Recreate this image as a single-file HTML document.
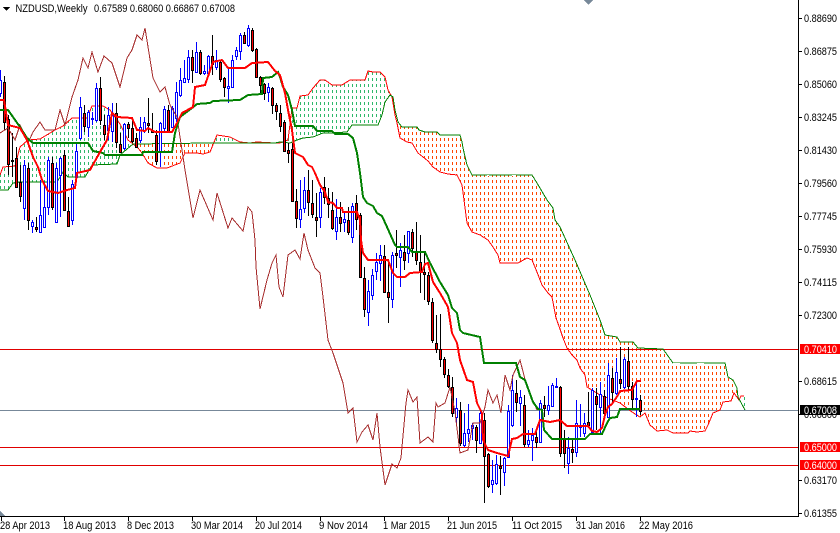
<!DOCTYPE html>
<html><head><meta charset="utf-8"><title>NZDUSD,Weekly</title>
<style>html,body{margin:0;padding:0;background:#fff;overflow:hidden}svg{display:block}text{font-family:"Liberation Sans",sans-serif;font-size:11px;fill:#000}</style>
</head><body>
<svg width="840" height="533" viewBox="0 0 840 533" xmlns="http://www.w3.org/2000/svg">
<defs>
<pattern id="g" width="4" height="6" patternUnits="userSpaceOnUse"><rect x="0" y="0" width="1" height="3" fill="#2eb86a"/></pattern>
<pattern id="o" width="4" height="6" patternUnits="userSpaceOnUse"><rect x="0" y="0" width="1" height="3" fill="#ff4500"/></pattern>
</defs>
<rect width="840" height="533" fill="#fff"/>
<g shape-rendering="crispEdges">
<polygon fill="url(#g)" points="0,175 3,167 15,166 20,147 28,140 40,139 55,130 63,126 72,118 87,118 92,106 103,106 110,110 120,124 128,140 133,144 120,155 117,164 92,165 85,177 68,177 63,172 57,182 20,182 13,183 8,190 0,190"/>
<polygon fill="url(#o)" points="133,144 214,143 210,152 203,154 197,153 185,153 180,163 167,168 157,168 148,163 142,153 138,148"/>
<polygon fill="url(#g)" points="214,143 217,135 230,137 240,142 250,143 257,142 275,143 280,143 288,140 292,108 297,108 300,96 308,95 313,88 320,80 325,80 332,85 342,85 350,80 365,80 368,71 373,72 380,72 385,77 388,90 391,96 390,95 385,102 382,115 378,125 352,125 347,132 330,133 323,133 313,137 303,138 297,140 290,143 280,142"/>
<polygon fill="url(#o)" points="392,97 394,105 398,122 402,127 417,127 419,130 425,132 437,132 440,135 460,135 462,142 463,148 467,165 472,175 532,175 537,183 547,200 553,208 555,220 560,227 575,260 590,295 600,320 605,335 617,337 620,342 633,342 638,348 663,349 673,363 725,363 728,377 733,380 737,388 741,396 735,397 732,400 723,400 720,410 713,413 708,425 705,431 697,432 690,431 688,433 673,433 667,430 657,431 650,425 645,413 640,417 632,412 620,403 600,395 587,387 585,375 580,368 577,360 572,355 567,348 563,338 560,329 556,318 552,297 548,293 542,285 537,272 532,260 527,258 518,263 500,263 498,255 493,247 488,240 480,235 472,232 467,223 464,200 462,185 457,175 448,174 440,172 433,167 428,161 418,153 412,143 407,142 400,138 397,123 395,115"/>
<path d="M744.5 397V410" stroke="#2eb86a" stroke-dasharray="3 3" fill="none"/>
<!-- price levels -->
<path d="M0 349.5H798M0 447.5H798M0 465.5H798" stroke="#e00000" fill="none"/>
<path d="M0 410.5H798" stroke="#778899" fill="none"/>
<!-- senkou -->
<polyline fill="none" stroke="#ff0000" points="0,175 3,167 15,166 20,147 28,140 40,139 55,130 63,126 72,118 87,118 92,106 103,106 110,110 120,124 128,140 138,148 142,153 148,163 157,168 167,168 180,163 185,153 197,153 203,154 210,152 217,135 230,137 240,142 250,143 257,142 275,143 280,143 288,140 292,108 297,108 300,96 308,95 313,88 320,80 325,80 332,85 342,85 350,80 365,80 368,71 373,72 380,72 385,77 388,90 392,97 395,115 397,123 400,138 407,142 412,143 418,153 428,161 433,167 440,172 448,174 457,175 462,185 464,200 467,223 472,232 480,235 488,240 493,247 498,255 500,263 518,263 527,258 532,260 537,272 542,285 548,293 552,297 556,318 560,329 563,338 567,348 572,355 577,360 580,368 585,375 587,387 600,395 620,403 632,412 640,417 645,413 650,425 657,431 667,430 673,433 688,433 690,431 697,432 705,431 708,425 713,413 720,410 723,402 731,401 734,393 739,400 741,396 744,396"/>
<polyline fill="none" stroke="#008000" points="0,190 8,190 13,183 20,182 57,182 63,172 68,177 85,177 92,165 117,164 120,155 133,144 210,143 275,143 280,142 290,143 297,140 303,138 313,137 323,133 330,133 347,132 352,125 378,125 382,115 385,102 390,95 393,97 395,110 398,122 402,127 417,127 419,130 425,132 437,132 440,135 460,135 462,142 463,148 467,165 472,175 532,175 537,183 547,200 553,208 555,220 560,227 575,260 590,295 600,320 605,335 617,337 620,342 633,342 638,348 663,349 673,363 725,363 728,377 733,380 737,388 738,397 745,410"/>
<path d="M487 175.5h2M512 175.5h4M673 363.5h7M697 363.5h7M483 235.5h2" stroke="#fff" fill="none"/>
<!-- blue candles -->
<path fill="none" stroke="#0000ff" d="M.5 70V97M24.5 160V220M32.5 220V233M40.5 180V233M44.5 182V227M48.5 157V215M56.5 163V223M60.5 157V217M72.5 180V225M76.5 143V182M80.5 97V140M88.5 110V137M92.5 112V125M96.5 83V122M108.5 107V140M112.5 103V142M124.5 123V150M140.5 117V143M144.5 117V133M160.5 122V167M164.5 106V132M172.5 106V128M176.5 82V122M180.5 68V97M184.5 60V83M188.5 50V83M196.5 42V73M204.5 65V75M208.5 55V75M216.5 50V70M228.5 67V103M232.5 55V88M236.5 47V60M240.5 33V60M248.5 25V47M268.5 83V102M300.5 180V228M304.5 177V213M320.5 188V228M336.5 199V240M344.5 213V232M352.5 203V243M368.5 280V326M372.5 269V300M376.5 253V280M380.5 245V281M392.5 252V308M400.5 243V287M408.5 232V263M456.5 398V426M464.5 413V447M468.5 404V442M472.5 423V440M480.5 410V443M492.5 460V493M496.5 455V485M504.5 457V486M508.5 405V458M512.5 375V427M520.5 390V426M528.5 430V447M532.5 428V461M540.5 400V443M548.5 386V415M552.5 383V407M556.5 378V388M568.5 437V474M576.5 400V457M580.5 404V437M584.5 413V437M592.5 388V433M600.5 382V433M608.5 363V418M616.5 358V395M624.5 357V389M636.5 382V417"/>
<path fill="#fff" stroke="#0000ff" d="M-.5 80.5h2v13h-2zM23.5 165.5h2v43h-2zM31.5 222.5h2v4h-2zM39.5 215.5h2v17h-2zM43.5 207.5h2v20h-2zM47.5 160.5h2v47h-2zM55.5 168.5h2v54h-2zM59.5 158.5h2v17h-2zM71.5 184.5h2v36h-2zM75.5 151.5h2v26h-2zM79.5 107.5h2v31h-2zM87.5 112.5h2v15h-2zM91.5 118.5h2v1h-2zM95.5 88.5h2v32h-2zM107.5 115.5h2v15h-2zM111.5 115.5h2v16h-2zM123.5 124.5h2v24h-2zM139.5 127.5h2v13h-2zM143.5 122.5h2v8h-2zM159.5 123.5h2v29h-2zM163.5 109.5h2v19h-2zM171.5 108.5h2v19h-2zM175.5 92.5h2v26h-2zM179.5 80.5h2v15h-2zM183.5 78.5h2v4h-2zM187.5 57.5h2v22h-2zM195.5 52.5h2v20h-2zM203.5 71.5h2v2h-2zM207.5 56.5h2v17h-2zM215.5 60.5h2v7h-2zM227.5 86.5h2v2h-2zM231.5 60.5h2v27h-2zM235.5 50.5h2v6h-2zM239.5 35.5h2v16h-2zM247.5 28.5h2v17h-2zM267.5 87.5h2v5h-2zM299.5 209.5h2v10h-2zM303.5 190.5h2v18h-2zM319.5 192.5h2v25h-2zM335.5 217.5h2v14h-2zM343.5 219.5h2v3h-2zM351.5 206.5h2v31h-2zM367.5 291.5h2v21h-2zM371.5 275.5h2v20h-2zM375.5 262.5h2v9h-2zM379.5 255.5h2v8h-2zM391.5 255.5h2v44h-2zM399.5 250.5h2v7h-2zM407.5 231.5h2v22h-2zM455.5 408.5h2v9h-2zM463.5 433.5h2v12h-2zM467.5 429.5h2v4h-2zM471.5 425.5h2v3h-2zM479.5 413.5h2v30h-2zM491.5 480.5h2v4h-2zM495.5 464.5h2v19h-2zM503.5 458.5h2v14h-2zM507.5 411.5h2v46h-2zM511.5 390.5h2v35h-2zM519.5 397.5h2v6h-2zM527.5 440.5h2v4h-2zM531.5 435.5h2v5h-2zM539.5 403.5h2v39h-2zM547.5 405.5h2v5h-2zM551.5 385.5h2v21h-2zM555.5 386.5h2v1h-2zM567.5 448.5h2v15h-2zM575.5 423.5h2v29h-2zM579.5 425.5h2v2h-2zM583.5 423.5h2v10h-2zM591.5 390.5h2v42h-2zM599.5 394.5h2v13h-2zM607.5 375.5h2v42h-2zM615.5 372.5h2v21h-2zM623.5 359.5h2v28h-2zM635.5 398.5h2v1h-2z"/>
<!-- red candles -->
<path fill="none" stroke="#000" d="M4.5 76V130M8.5 115V175M12.5 133V177M16.5 147V188M20.5 165V202M28.5 163V230M36.5 217V232M52.5 157V210M64.5 150V211M68.5 197V227M84.5 105V132M100.5 77V125M104.5 115V140M116.5 103V148M120.5 133V153M128.5 122V138M132.5 120V143M136.5 133V148M148.5 98V133M152.5 113V133M156.5 130V165M168.5 105V133M192.5 50V83M200.5 50V75M212.5 35V75M220.5 60V82M224.5 77V97M244.5 32V44M252.5 28V52M256.5 48V78M260.5 76V95M264.5 83V100M272.5 87V114M276.5 103V120M280.5 105V132M284.5 120V152M288.5 143V163M292.5 143V202M296.5 189V228M308.5 170V216M312.5 180V218M316.5 193V237M324.5 177V204M328.5 188V218M332.5 192V230M340.5 202V232M348.5 207V235M356.5 195V230M360.5 213V278M364.5 267V317M384.5 245V293M388.5 260V323M396.5 230V268M404.5 235V270M412.5 229V257M416.5 222V265M420.5 235V293M424.5 253V300M428.5 272V305M432.5 298V343M436.5 315V353M440.5 314V367M444.5 357V378M448.5 369V388M452.5 377V417M460.5 402V446M476.5 425V453M484.5 413V503M488.5 453V488M500.5 456V495M516.5 380V412M524.5 395V447M536.5 428V448M544.5 396V417M560.5 386V457M564.5 430V468M572.5 440V463M588.5 392V427M596.5 388V430M604.5 390V417M612.5 368V403M620.5 347V389M628.5 347V390M632.5 382V410M640.5 395V415"/>
<path fill="#f00" stroke="#000" d="M3.5 82.5h2v40h-2zM7.5 119.5h2v45h-2zM11.5 160.5h2v1h-2zM15.5 158.5h2v29h-2zM19.5 182.5h2v14h-2zM27.5 168.5h2v52h-2zM35.5 227.5h2v2h-2zM51.5 163.5h2v44h-2zM63.5 155.5h2v55h-2zM67.5 211.5h2v15h-2zM83.5 113.5h2v13h-2zM99.5 88.5h2v32h-2zM103.5 125.5h2v9h-2zM115.5 113.5h2v29h-2zM119.5 144.5h2v8h-2zM127.5 124.5h2v4h-2zM131.5 128.5h2v13h-2zM135.5 138.5h2v9h-2zM147.5 123.5h2v2h-2zM151.5 130.5h2v2h-2zM155.5 135.5h2v26h-2zM167.5 110.5h2v21h-2zM191.5 57.5h2v13h-2zM199.5 52.5h2v21h-2zM211.5 56.5h2v8h-2zM219.5 62.5h2v17h-2zM223.5 78.5h2v9h-2zM243.5 35.5h2v8h-2zM251.5 30.5h2v20h-2zM255.5 49.5h2v28h-2zM259.5 77.5h2v8h-2zM263.5 84.5h2v9h-2zM271.5 88.5h2v17h-2zM275.5 105.5h2v6h-2zM279.5 113.5h2v13h-2zM283.5 122.5h2v29h-2zM287.5 150.5h2v3h-2zM291.5 149.5h2v52h-2zM295.5 201.5h2v17h-2zM307.5 190.5h2v12h-2zM311.5 203.5h2v11h-2zM315.5 217.5h2v3h-2zM323.5 187.5h2v10h-2zM327.5 198.5h2v6h-2zM331.5 210.5h2v18h-2zM339.5 217.5h2v6h-2zM347.5 220.5h2v12h-2zM355.5 203.5h2v16h-2zM359.5 215.5h2v62h-2zM363.5 278.5h2v31h-2zM383.5 256.5h2v36h-2zM387.5 292.5h2v5h-2zM395.5 253.5h2v2h-2zM403.5 252.5h2v8h-2zM411.5 232.5h2v16h-2zM415.5 252.5h2v8h-2zM419.5 262.5h2v10h-2zM423.5 272.5h2v2h-2zM427.5 275.5h2v26h-2zM431.5 302.5h2v38h-2zM435.5 343.5h2v6h-2zM439.5 349.5h2v10h-2zM443.5 359.5h2v15h-2zM447.5 375.5h2v11h-2zM451.5 387.5h2v26h-2zM459.5 410.5h2v33h-2zM475.5 427.5h2v13h-2zM483.5 420.5h2v36h-2zM487.5 454.5h2v32h-2zM499.5 466.5h2v2h-2zM515.5 393.5h2v9h-2zM523.5 405.5h2v39h-2zM535.5 437.5h2v5h-2zM543.5 405.5h2v3h-2zM559.5 387.5h2v66h-2zM563.5 438.5h2v15h-2zM571.5 449.5h2v3h-2zM587.5 422.5h2v3h-2zM595.5 396.5h2v8h-2zM603.5 396.5h2v17h-2zM611.5 378.5h2v14h-2zM619.5 379.5h2v4h-2zM627.5 361.5h2v25h-2zM631.5 386.5h2v13h-2zM639.5 400.5h2v11h-2z"/>
<!-- chikou -->
<polyline fill="none" stroke="#a52a2a" points="0,133 8,128 15,140 20,125 28,143 33,132 40,122 45,130 55,130 60,110 65,125 72,97 78,80 83,58 88,68 92,52 98,72 104,56 112,63 120,87 127,58 132,50 137,35 142,40 145,28 153,78 160,92 165,87 170,105 177,117 185,170 193,218 200,190 213,220 217,193 228,228 232,218 243,231 248,207 252,212 255,240 256,267 260,309 267,280 272,263 276,255 279,287 283,297 288,255 295,250 300,259 304,233 308,250 315,268 320,273 323,297 328,340 333,353 343,383 348,413 353,408 357,442 362,432 368,425 373,440 377,413 380,447 385,485 392,464 397,468 401,458 406,403 408,390 413,402 417,397 420,443 428,437 433,442 436,403 438,407 445,403 450,387 455,412 460,453 468,450 473,423 480,423 485,407 488,390 493,403 497,395 501,413 505,375 510,390 513,375 520,360 527,387 537,410"/>
<!-- kijun -->
<polyline fill="none" stroke="#008000" stroke-width="2" points="0,110 8,110 13,117 20,127 27,138 33,143 88,143 93,151 103,153 105,155 142,155 143,152 172,152 175,133 180,117 192,108 197,104 210,103 213,101 240,100 248,95 262,94 263,78 272,77 278,72 280,77 283,87 288,95 292,110 295,126 313,126 317,131 332,131 335,134 348,134 353,138 357,153 360,173 363,197 367,203 373,206 377,213 382,216 387,227 395,245 397,247 408,247 412,252 425,252 430,263 440,282 448,295 452,308 457,313 460,330 463,333 480,337 484,363 516,363 520,377 525,380 533,402 538,409 542,410 544,430 552,439 585,439 590,434 602,434 607,423 610,418 617,417 620,409 640,409"/>
<!-- tenkan -->
<polyline fill="none" stroke="#ff0000" stroke-width="2" points="0,100 4,100 8,125 20,128 27,140 33,157 38,167 42,180 48,191 58,193 67,190 75,188 77,173 90,170 100,152 107,140 112,113 117,117 132,118 137,130 145,131 148,128 155,132 172,132 177,123 182,113 193,107 195,87 205,85 213,62 222,60 228,68 245,68 252,63 268,62 275,71 280,75 285,93 288,110 292,130 295,153 303,157 308,165 312,167 315,173 320,185 325,192 328,202 333,203 337,208 342,208 343,212 357,212 360,220 361,240 363,253 368,260 388,260 393,273 397,277 405,277 410,273 422,272 425,264 428,263 433,282 440,293 448,307 452,333 457,343 460,360 467,380 473,382 477,403 482,413 483,440 488,450 497,453 508,456 512,439 517,438 523,434 535,434 540,420 550,422 560,420 567,426 588,426 592,431 597,432 602,428 605,415 608,407 612,404 618,395 620,391 632,390 637,381 641,381"/>
<!-- axes -->
<path fill="none" stroke="#000" d="M798.5 0V516.5M0 516.5H799M799 18.5h3M799 51.5h3M799 84.5h3M799 117.5h3M799 150.5h3M799 183.5h3M799 216.5h3M799 249.5h3M799 282.5h3M799 315.5h3M799 381.5h3M799 414.5h3M799 480.5h3M799 513.5h3M1.5 516V521M64.5 516V521M128.5 516V521M192.5 516V521M256.5 516V521M320.5 516V521M384.5 516V521M448.5 516V521M512.5 516V521M576.5 516V521M640.5 516V521"/>
<polygon points="584,0 593,0 588.5,5" fill="#778899"/>
<polygon points="0,511 5,516 0,516" fill="#778899"/>
<polygon points="3,7 10,7 6.5,11" fill="#000"/>
</g>
<text x="15.5" y="12" textLength="72" lengthAdjust="spacingAndGlyphs">NZDUSD,Weekly</text>
<text x="94" y="12" textLength="141" lengthAdjust="spacingAndGlyphs">0.67589 0.68060 0.66867 0.67008</text>
<g>
<text x="804" y="22" textLength="33" lengthAdjust="spacingAndGlyphs">0.88690</text>
<text x="804" y="55" textLength="33" lengthAdjust="spacingAndGlyphs">0.86875</text>
<text x="804" y="88" textLength="33" lengthAdjust="spacingAndGlyphs">0.85060</text>
<text x="804" y="121" textLength="33" lengthAdjust="spacingAndGlyphs">0.83245</text>
<text x="804" y="154" textLength="33" lengthAdjust="spacingAndGlyphs">0.81430</text>
<text x="804" y="187" textLength="33" lengthAdjust="spacingAndGlyphs">0.79560</text>
<text x="804" y="220" textLength="33" lengthAdjust="spacingAndGlyphs">0.77745</text>
<text x="804" y="253" textLength="33" lengthAdjust="spacingAndGlyphs">0.75930</text>
<text x="804" y="286" textLength="33" lengthAdjust="spacingAndGlyphs">0.74115</text>
<text x="804" y="319" textLength="33" lengthAdjust="spacingAndGlyphs">0.72300</text>
<text x="804" y="385" textLength="33" lengthAdjust="spacingAndGlyphs">0.68615</text>
<text x="804" y="418" textLength="33" lengthAdjust="spacingAndGlyphs">0.66800</text>
<text x="804" y="484" textLength="33" lengthAdjust="spacingAndGlyphs">0.63170</text>
<text x="804" y="517" textLength="33" lengthAdjust="spacingAndGlyphs">0.61355</text>
</g>
<rect x="800" y="344" width="40" height="10" fill="#f00" shape-rendering="crispEdges"/>
<rect x="800" y="405" width="40" height="10" fill="#000" shape-rendering="crispEdges"/>
<rect x="800" y="442" width="40" height="10" fill="#f00" shape-rendering="crispEdges"/>
<rect x="800" y="460" width="40" height="10" fill="#f00" shape-rendering="crispEdges"/>
<g>
<text x="804" y="353" textLength="33" lengthAdjust="spacingAndGlyphs" style="fill:#fff">0.70410</text>
<text x="804" y="414" textLength="33" lengthAdjust="spacingAndGlyphs" style="fill:#fff">0.67008</text>
<text x="804" y="451" textLength="33" lengthAdjust="spacingAndGlyphs" style="fill:#fff">0.65000</text>
<text x="804" y="469" textLength="33" lengthAdjust="spacingAndGlyphs" style="fill:#fff">0.64000</text>
</g>
<text x="0" y="529" textLength="50" lengthAdjust="spacingAndGlyphs">28 Apr 2013</text>
<text x="63" y="529" textLength="53" lengthAdjust="spacingAndGlyphs">18 Aug 2013</text>
<text x="127" y="529" textLength="47" lengthAdjust="spacingAndGlyphs">8 Dec 2013</text>
<text x="191" y="529" textLength="52" lengthAdjust="spacingAndGlyphs">30 Mar 2014</text>
<text x="255" y="529" textLength="47" lengthAdjust="spacingAndGlyphs">20 Jul 2014</text>
<text x="319" y="529" textLength="49" lengthAdjust="spacingAndGlyphs">9 Nov 2014</text>
<text x="383" y="529" textLength="47" lengthAdjust="spacingAndGlyphs">1 Mar 2015</text>
<text x="447" y="529" textLength="50" lengthAdjust="spacingAndGlyphs">21 Jun 2015</text>
<text x="512" y="529" textLength="50" lengthAdjust="spacingAndGlyphs">11 Oct 2015</text>
<text x="576" y="529" textLength="49" lengthAdjust="spacingAndGlyphs">31 Jan 2016</text>
<text x="639" y="529" textLength="54" lengthAdjust="spacingAndGlyphs">22 May 2016</text>
</svg>
</body></html>
